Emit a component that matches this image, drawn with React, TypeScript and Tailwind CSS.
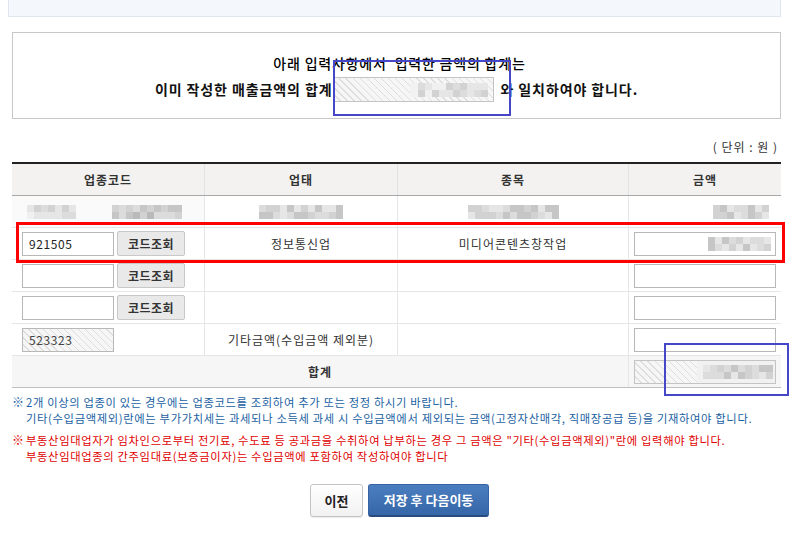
import React from "react"

const SHADES = [
  "bg-[#f0f0f0]",
  "bg-[#e6e6e6]",
  "bg-[#dcdcdc]",
  "bg-[#d2d2d2]",
  "bg-[#c6c6c6]",
  "bg-[#bababa]",
  "bg-[#adadad]",
]

const HATCH =
  "bg-[#f6f6f6] bg-[image:repeating-linear-gradient(45deg,#f6f6f6_0px,#f6f6f6_4px,#dedede_4px,#dedede_5px)]"

// pixelated (mosaic) placeholder for masked values
function Pixels({ cols, seed, dark = 0 }: { cols: number; seed: number; dark?: number }) {
  let s = seed
  const cells = []
  for (let i = 0; i < cols * 2; i++) {
    s = (s * 9301 + 49297) % 233280
    const idx = Math.min(6, Math.floor((s / 233280) * 4) + dark)
    cells.push(<div key={i} className={SHADES[idx]} />)
  }
  return <div className="grid grid-rows-[7px_7px] grid-flow-col auto-cols-[7px] shrink-0">{cells}</div>
}

function CodeInput({ value }: { value?: string }) {
  return (
    <div className="h-[24px] w-[92px] border border-[#b8b8b8] bg-white pl-[6px] text-[12px] leading-[22px] tracking-[0.6px] text-[#222]">
      {value}
    </div>
  )
}

function LookupButton() {
  return (
    <button className="ml-[3px] h-[25px] w-[68px] rounded-[2px] border border-[#c8c8c8] bg-[#e9e9e9] text-[12px] font-bold tracking-[0.5px] text-[#333]">
      코드조회
    </button>
  )
}

function AmountInput({ children }: { children?: React.ReactNode }) {
  return (
    <div className="flex h-[24px] w-[142px] items-center justify-end border border-[#b8b8b8] bg-white pr-[4px]">
      {children}
    </div>
  )
}

const ROW = "grid grid-cols-[192px_193px_231px_153px] h-[32px] border-b border-[#e6e6e6]"
const CELL = "flex items-center justify-center border-l border-[#e6e6e6] text-[12px] tracking-[1px] text-[#333]"

export default function App() {
  return (
    <div className="relative h-[536px] w-[805px] overflow-hidden bg-white font-['Noto_Sans_CJK_KR','Noto_Sans',sans-serif] text-[#222]">
      <div className="ml-[8px] h-[17px] w-[773px] border border-t-0 border-[#dfe6ef] bg-[#f4f7fb]" />

      <div className="ml-[12px] mt-[15px] h-[87px] w-[769px] border border-[#c8c8c8] pt-[21px]">
        <div className="h-[18px] pl-[6px] text-center text-[14px] font-medium leading-[18px] tracking-[0.8px] text-[#000]">
          아래 입력사항에서&nbsp; 입력한 금액의 합계는
        </div>
        <div className="mt-[5px] flex h-[25px] items-center justify-center text-[14px] font-bold tracking-[0.9px] text-[#111]">
          <span>이미 작성한 매출금액의 합계</span>
          <div className={`ml-[1px] flex h-[25px] w-[161px] items-center justify-end border border-[#c4c4c4] pr-[5px] ${HATCH}`}>
            <div className="bg-[#f2f2f2] pl-[8px]">
              <Pixels cols={10} seed={11} />
            </div>
          </div>
          <span className="ml-[6px]">와 일치하여야 합니다.</span>
        </div>
      </div>

      <div className="ml-[12px] mt-[20px] h-[16px] w-[769px] pr-[3px] text-right text-[12px] leading-[16px] tracking-[1px] text-[#333]">
        (&nbsp;단위&nbsp;:&nbsp;원&nbsp;)
      </div>

      <div className="ml-[12px] mt-[7px] w-[769px] border-t-2 border-[#222]">
        <div className="grid h-[32px] grid-cols-[192px_193px_231px_153px] border-b border-[#a8a8a8] bg-[#f3f2f0] text-[12px] font-bold tracking-[1px] text-[#333]">
          <div className="flex items-center justify-center">업종코드</div>
          <div className="flex items-center justify-center border-l border-[#e2e2e2]">업태</div>
          <div className="flex items-center justify-center border-l border-[#e2e2e2]">종목</div>
          <div className="flex items-center justify-center border-l border-[#e2e2e2]">금액</div>
        </div>

        <div className={ROW}>
          <div className="flex items-center bg-[#fafafa] pl-[15px]">
            <Pixels cols={7} seed={3} />
            <div className="ml-[36px]">
              <Pixels cols={10} seed={7} dark={2} />
            </div>
          </div>
          <div className={CELL}>
            <Pixels cols={12} seed={5} dark={1} />
          </div>
          <div className={CELL}>
            <Pixels cols={13} seed={9} dark={1} />
          </div>
          <div className="flex items-center justify-end border-l border-[#e6e6e6] pr-[12px]">
            <Pixels cols={8} seed={13} dark={1} />
          </div>
        </div>

        <div className={ROW}>
          <div className="flex items-center pl-[10px]">
            <CodeInput value="921505" />
            <LookupButton />
          </div>
          <div className={CELL}>정보통신업</div>
          <div className={CELL}>미디어콘텐츠창작업</div>
          <div className="flex items-center border-l border-[#e6e6e6] pl-[5px]">
            <AmountInput>
              <Pixels cols={9} seed={17} dark={1} />
            </AmountInput>
          </div>
        </div>

        {[0, 1].map((i) => (
          <div key={i} className={ROW}>
            <div className="flex items-center pl-[10px]">
              <CodeInput />
              <LookupButton />
            </div>
            <div className={CELL} />
            <div className={CELL} />
            <div className="flex items-center border-l border-[#e6e6e6] pl-[5px]">
              <AmountInput />
            </div>
          </div>
        ))}

        <div className={ROW}>
          <div className="flex items-center pl-[10px]">
            <div className={`h-[24px] w-[92px] border border-[#b8b8b8] pl-[6px] text-[12px] leading-[22px] tracking-[0.6px] text-[#444] ${HATCH}`}>
              523323
            </div>
          </div>
          <div className={CELL}>기타금액(수입금액 제외분)</div>
          <div className={CELL} />
          <div className="flex items-center border-l border-[#e6e6e6] pl-[5px]">
            <AmountInput />
          </div>
        </div>

        <div className="grid h-[32px] grid-cols-[616px_153px] border-b border-[#bfbfbf] bg-[#f6f6f6]">
          <div className="flex items-center justify-center text-[12px] font-bold tracking-[1px] text-[#333]">합계</div>
          <div className="flex items-center border-l border-[#e6e6e6] pl-[5px]">
            <div className={`flex h-[24px] w-[142px] items-center justify-end border border-[#c4c4c4] ${HATCH}`}>
              <div className="flex h-[22px] items-center bg-[#f1f1f1] pl-[6px] pr-[2px]">
                <Pixels cols={10} seed={21} dark={1} />
              </div>
            </div>
          </div>
        </div>
      </div>

      <div className="ml-[12px] mt-[6px] text-[11.3px] leading-[16px] tracking-[0.65px]">
        <div className="flex text-[#1a5fa3]">
          <span className="w-[14px] shrink-0 text-[12px] leading-[16px] tracking-normal">※</span>
          <div>
            <div>2개 이상의 업종이 있는 경우에는 업종코드를 조회하여 추가 또는 정정 하시기 바랍니다.</div>
            <div>
              기타(수입금액제외)란에는 부가가치세는 과세되나 소득세 과세 시 수입금액에서 제외되는 금액(고정자산매각, 직매장공급 등)을 기재하여야 합니다.
            </div>
          </div>
        </div>
        <div className="mt-[6px] flex text-[#e00000]">
          <span className="w-[14px] shrink-0 text-[12px] leading-[16px] tracking-normal">※</span>
          <div>
            <div>
              부동산임대업자가 임차인으로부터 전기료, 수도료 등 공과금을 수취하여 납부하는 경우 그 금액은 "기타(수입금액제외)"란에 입력해야 합니다.
            </div>
            <div>부동산임대업종의 간주임대료(보증금이자)는 수입금액에 포함하여 작성하여야 합니다</div>
          </div>
        </div>
      </div>

      <div className="ml-[12px] mt-[20px] flex w-[769px] justify-center gap-[5px] pl-[6px]">
        <button className="h-[33px] w-[53px] rounded-[3px] border border-[#c4c4c4] bg-gradient-to-b from-white to-[#f1f1f1] text-[13px] font-bold text-[#222] shadow-[0_1px_1px_rgba(0,0,0,0.08)]">
          이전
        </button>
        <button className="h-[33px] w-[121px] rounded-[3px] border border-[#3763a3] border-b-[2px] border-b-[#284b80] bg-gradient-to-b from-[#4b7ec0] to-[#3566a8] text-[13px] font-bold text-white">
          저장 후 다음이동
        </button>
      </div>

      {/* review annotations */}
      <div className="absolute left-[333px] top-[60px] h-[56px] w-[178px] border-2 border-[#4646c8]" />
      <div className="absolute left-[16px] top-[222px] h-[41px] w-[769px] border-[3px] border-[#ff0000]" />
      <div className="absolute left-[664px] top-[343px] h-[53px] w-[125px] border-2 border-[#4646c8]" />
    </div>
  )
}
